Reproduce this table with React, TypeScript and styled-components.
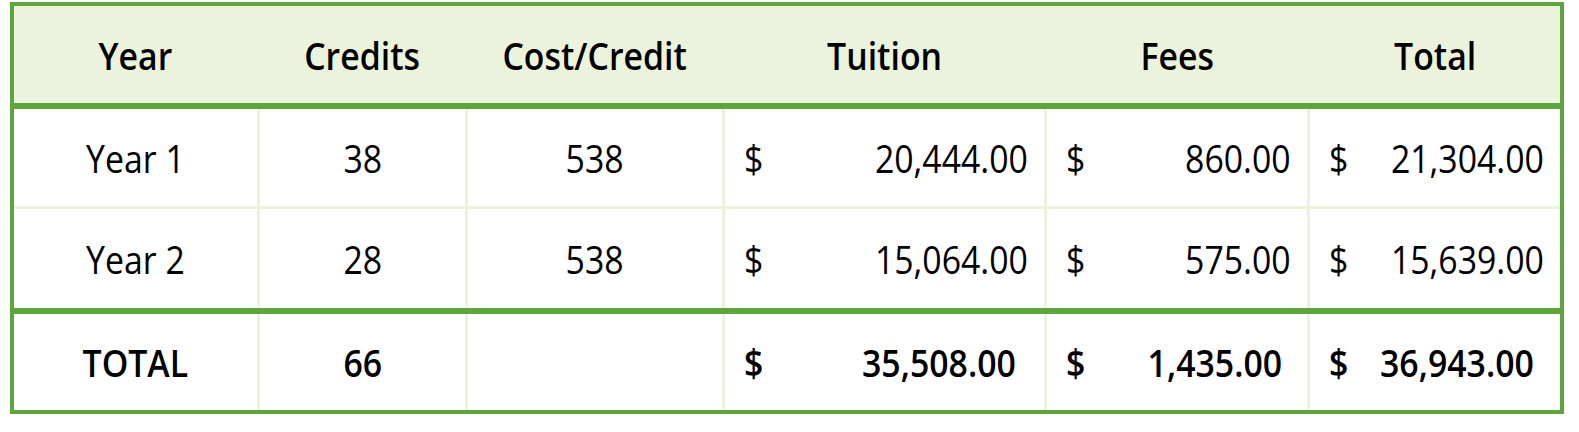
import React from "react";
import styled, { createGlobalStyle } from "styled-components";

const GlobalStyle = createGlobalStyle`
  body {
    margin: 0;
    padding: 2px 0 0 10px;
    background: #ffffff;
    font-family: "Open Sans", "Noto Sans", sans-serif;
    color: #000000;
  }
`;

const GREEN = "#5ea63c";
const PALE = "#ebf3dd";

const Frame = styled.div`
  width: 1546px;
  border: 4px solid ${GREEN};
  background: #ffffff;
`;

const Row = styled.div<{ $h: number; $head?: boolean; $line?: "green" | "pale" }>`
  display: grid;
  grid-template-columns: 243px 208px 257px 322px 263px 253px;
  height: ${(p) => p.$h}px;
  background: ${(p) => (p.$head ? PALE : "#ffffff")};
  border-top: ${(p) =>
    p.$line === "green" ? `6px solid ${GREEN}` : p.$line === "pale" ? `3px solid ${PALE}` : "none"};
`;

const Cell = styled.div<{ $bold?: boolean }>`
  display: flex;
  align-items: center;
  justify-content: center;
  font-size: 38px;
  font-weight: ${(p) => (p.$bold ? 600 : 400)};
  white-space: nowrap;
  & + & {
    border-left: 3px solid ${PALE};
  }
`;

const MoneyCell = styled(Cell)<{ $right: number }>`
  justify-content: space-between;
  padding: 0 ${(p) => p.$right}px 0 19px;
`;

// the sheet's font is narrower than Open Sans, so squeeze the glyphs a bit
const Text = styled.span<{ $origin?: "left" | "center" | "right" }>`
  display: inline-block;
  transform: scaleX(0.89);
  transform-origin: ${(p) => p.$origin ?? "center"} center;
`;

type Line = {
  year: string;
  credits: string;
  cost: string;
  tuition: string;
  fees: string;
  total: string;
};

const lines: Line[] = [
  { year: "Year 1", credits: "38", cost: "538", tuition: "20,444.00", fees: "860.00", total: "21,304.00" },
  { year: "Year 2", credits: "28", cost: "538", tuition: "15,064.00", fees: "575.00", total: "15,639.00" },
];

function Plain({ children, bold }: { children?: React.ReactNode; bold?: boolean }) {
  return (
    <Cell $bold={bold}>
      <Text>{children}</Text>
    </Cell>
  );
}

function Money({ value, bold, right }: { value: string; bold?: boolean; right: number }) {
  return (
    <MoneyCell $bold={bold} $right={right}>
      <Text $origin="left">$</Text>
      <Text $origin="right">{value}</Text>
    </MoneyCell>
  );
}

export default function App() {
  return (
    <>
      <GlobalStyle />
      <Frame>
        <Row $h={97} $head>
          <Plain bold>Year</Plain>
          <Plain bold>Credits</Plain>
          <Plain bold>Cost/Credit</Plain>
          <Plain bold>Tuition</Plain>
          <Plain bold>Fees</Plain>
          <Plain bold>Total</Plain>
        </Row>
        {lines.map((l, i) => (
          <Row key={l.year} $h={i === 0 ? 97 : 99} $line={i === 0 ? "green" : "pale"}>
            <Plain>{l.year}</Plain>
            <Plain>{l.credits}</Plain>
            <Plain>{l.cost}</Plain>
            <Money value={l.tuition} right={16} />
            <Money value={l.fees} right={16} />
            <Money value={l.total} right={16} />
          </Row>
        ))}
        <Row $h={96} $line="green">
          <Plain bold>TOTAL</Plain>
          <Plain bold>66</Plain>
          <Plain />
          <Money value="35,508.00" bold right={28} />
          <Money value="1,435.00" bold right={25} />
          <Money value="36,943.00" bold right={26} />
        </Row>
      </Frame>
    </>
  );
}
